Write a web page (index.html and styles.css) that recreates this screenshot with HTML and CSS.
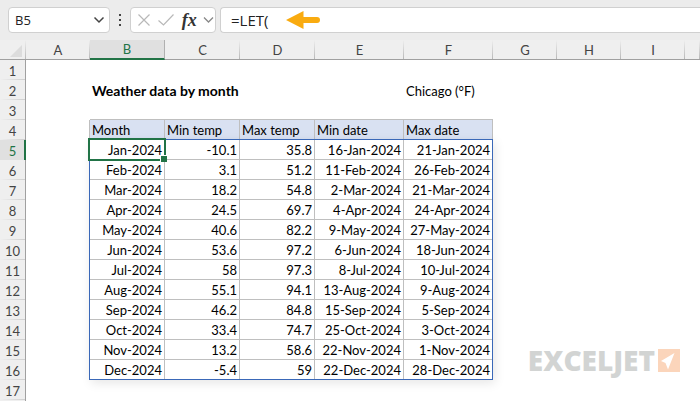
FILE: index.html
```html
<!DOCTYPE html>
<html lang="en">
<head>
<meta charset="utf-8">
<title>Weather data by month</title>
<link rel="stylesheet" href="styles.css">
</head>
<body>
<header class="toolbar">
  <div class="box name-box">
    <input class="name-input" type="text" value="B5" aria-label="Name box">
    <button class="icon-button" type="button" aria-label="Open name list">
      <svg width="12" height="8" viewBox="0 0 12 8"><path d="M1.500 1.500L6 6L10.500 1.500" fill="none" stroke="#444" stroke-width="1.500"/></svg>
    </button>
  </div>
  <svg class="grip" width="4" height="14" viewBox="0 0 4 14"><path d="M1 1h2v2h-2zM1 6h2v2h-2zM1 11h2v2h-2z" fill="#444"/></svg>
  <div class="box actions">
    <button class="icon-button" type="button" aria-label="Cancel">
      <svg width="14" height="14" viewBox="0 0 14 14"><path d="M1.500 1.500L12.500 12.500M12.500 1.500L1.500 12.500" fill="none" stroke="#b8b8b8" stroke-width="1.200"/></svg>
    </button>
    <button class="icon-button" type="button" aria-label="Enter">
      <svg width="18" height="14" viewBox="0 0 18 14"><path d="M1.500 7.500L6.500 12L16.500 1.500" fill="none" stroke="#b8b8b8" stroke-width="1.200"/></svg>
    </button>
    <button class="icon-button fx" type="button" aria-label="Insert function">fx</button>
    <button class="icon-button" type="button" aria-label="More functions">
      <svg width="11" height="8" viewBox="0 0 11 8"><path d="M1 1.500L5.500 6L10 1.500" fill="none" stroke="#888" stroke-width="1.300"/></svg>
    </button>
  </div>
  <div class="box formula">
    <input class="formula-input" type="text" value="=LET(" aria-label="Formula bar">
    <svg class="arrow" width="34" height="18" viewBox="0 0 34 18"><path d="M0 9L17.500 0V6H31A3 3 0 0 1 31 12H17.500V18Z" fill="#f9ab10"/></svg>
  </div>
</header>
<main class="sheet">
  <table class="grid">
    <colgroup><col class="c-head"><col class="c-s"><col class="c-m"><col class="c-m"><col class="c-m"><col class="c-l"><col class="c-l"><col class="c-s"><col class="c-s"><col class="c-s"><col></colgroup>
    <thead>
      <tr><th class="corner"><svg width="12" height="12" viewBox="0 0 12 12"><path d="M12 0V12H0Z" fill="#dcdcdc"/></svg></th><th>A</th><th class="active">B</th><th>C</th><th>D</th><th>E</th><th>F</th><th>G</th><th>H</th><th>I</th><th></th></tr>
    </thead>
    <tbody>
      <tr><th>1</th><td colspan="10"></td></tr>
      <tr><th>2</th><td></td><td class="title" colspan="4">Weather data by month</td><td>Chicago (°F)</td><td colspan="4"></td></tr>
      <tr><th>3</th><td></td><td class="edge"></td><td class="edge"></td><td class="edge"></td><td class="edge"></td><td class="edge"></td><td colspan="4"></td></tr>
      <tr class="labels"><th>4</th><td class="before"></td><td class="c">Month</td><td class="c">Min temp</td><td class="c">Max temp</td><td class="c">Min date</td><td class="c">Max date</td><td colspan="4"></td></tr>
      <tr class="data"><th class="active">5</th><td></td><td class="c selected">Jan-2024<span class="selection"></span></td><td class="c">-10.1</td><td class="c">35.8</td><td class="c">16-Jan-2024</td><td class="c">21-Jan-2024</td><td colspan="4"></td></tr>
      <tr class="data"><th>6</th><td></td><td class="c">Feb-2024</td><td class="c">3.1</td><td class="c">51.2</td><td class="c">11-Feb-2024</td><td class="c">26-Feb-2024</td><td colspan="4"></td></tr>
      <tr class="data"><th>7</th><td></td><td class="c">Mar-2024</td><td class="c">18.2</td><td class="c">54.8</td><td class="c">2-Mar-2024</td><td class="c">21-Mar-2024</td><td colspan="4"></td></tr>
      <tr class="data"><th>8</th><td></td><td class="c">Apr-2024</td><td class="c">24.5</td><td class="c">69.7</td><td class="c">4-Apr-2024</td><td class="c">24-Apr-2024</td><td colspan="4"></td></tr>
      <tr class="data"><th>9</th><td></td><td class="c">May-2024</td><td class="c">40.6</td><td class="c">82.2</td><td class="c">9-May-2024</td><td class="c">27-May-2024</td><td colspan="4"></td></tr>
      <tr class="data"><th>10</th><td></td><td class="c">Jun-2024</td><td class="c">53.6</td><td class="c">97.2</td><td class="c">6-Jun-2024</td><td class="c">18-Jun-2024</td><td colspan="4"></td></tr>
      <tr class="data"><th>11</th><td></td><td class="c">Jul-2024</td><td class="c">58</td><td class="c">97.3</td><td class="c">8-Jul-2024</td><td class="c">10-Jul-2024</td><td colspan="4"></td></tr>
      <tr class="data"><th>12</th><td></td><td class="c">Aug-2024</td><td class="c">55.1</td><td class="c">94.1</td><td class="c">13-Aug-2024</td><td class="c">9-Aug-2024</td><td colspan="4"></td></tr>
      <tr class="data"><th>13</th><td></td><td class="c">Sep-2024</td><td class="c">46.2</td><td class="c">84.8</td><td class="c">15-Sep-2024</td><td class="c">5-Sep-2024</td><td colspan="4"></td></tr>
      <tr class="data"><th>14</th><td></td><td class="c">Oct-2024</td><td class="c">33.4</td><td class="c">74.7</td><td class="c">25-Oct-2024</td><td class="c">3-Oct-2024</td><td colspan="4"></td></tr>
      <tr class="data"><th>15</th><td></td><td class="c">Nov-2024</td><td class="c">13.2</td><td class="c">58.6</td><td class="c">22-Nov-2024</td><td class="c">1-Nov-2024</td><td colspan="4"></td></tr>
      <tr class="data"><th>16</th><td></td><td class="c">Dec-2024</td><td class="c">-5.4</td><td class="c">59</td><td class="c">22-Dec-2024</td><td class="c">28-Dec-2024</td><td colspan="4"></td></tr>
      <tr><th>17</th><td colspan="10"></td></tr>
    </tbody>
  </table>
  <div class="range"></div>
  <div class="brand">
    <span>EXCELJET</span>
    <svg width="22" height="23" viewBox="0 0 22 23"><rect width="22" height="23" fill="#fbd5bb"/><path d="M16.500 4L3 12L7.500 14L10 20.500Z" fill="#fff"/></svg>
  </div>
</main>
</body>
</html>
```
FILE: styles.css
```css
* {
  box-sizing: border-box;
}

body {
  margin: 0;
  min-height: 100vh;
  display: flex;
  flex-direction: column;
  overflow: hidden;
  background: #fff;
  color: #000;
  font-family: Lato, sans-serif;
  font-size: 13px;
}

.toolbar {
  display: flex;
  align-items: center;
  height: 40px;
  padding-left: 8px;
  background: #ececec;
}

.box {
  display: flex;
  align-items: center;
  height: 26px;
  background: #fff;
  border: 1px solid #d0d0d0;
  border-radius: 4px;
}

.name-box {
  width: 102px;
  padding: 0 4px 0 6px;
}

.name-input,
.formula-input {
  min-width: 0;
  padding: 0;
  border: 0;
  outline: 0;
  background: none;
  color: #222;
  font: 13px "Open Sans", sans-serif;
}

.name-input {
  flex: 1;
}

.grip {
  margin: 0 8px;
}

.icon-button {
  display: flex;
  align-items: center;
  padding: 0;
  border: 0;
  background: none;
}

.actions {
  width: 86px;
  justify-content: space-between;
  padding: 0 1px 0 6px;
}

.fx {
  color: #333;
  font: italic bold 18px/20px "Liberation Serif", serif;
}

.formula {
  flex: 1;
  margin-left: 4px;
  padding-left: 10px;
  border-right: 0;
  border-radius: 4px 0 0 4px;
}

.formula-input {
  width: 55px;
  font-size: 15px;
}

.sheet {
  position: relative;
  flex: 1;
  background: linear-gradient(to right, #efefef 25px, #a0a0a0 25px, #a0a0a0 26px, #fff 26px);
}

.grid {
  width: 100%;
  table-layout: fixed;
  border-collapse: separate;
  border-spacing: 0;
}

.c-head { width: 26px; }
.c-s { width: 64px; }
.c-m { width: 75px; }
.c-l { width: 89px; }

th,
td {
  height: 20px;
  padding: 1px 2px 0;
  line-height: 18px;
  white-space: nowrap;
}

td {
  text-align: left;
}

th {
  padding: 1px 0 0;
  color: #444;
  font-weight: 400;
  text-align: center;
  background: #efefef;
}

thead th {
  border-bottom: 1px solid #a0a0a0;
  background: linear-gradient(to bottom, #efefef, #b8b8b8) right / 1px 100% no-repeat #efefef;
}

thead th.active {
  padding-top: 0;
  background: #e0e0e0;
  color: #217346;
  border-right: 1px solid #b0b0b0;
  border-bottom: 2px solid #217346;
}

thead .corner {
  padding: 0;
}

.corner svg {
  display: block;
  margin: 3px 0 0 10px;
}

tbody th {
  border-right: 1px solid #a0a0a0;
  background: linear-gradient(to right, #efefef, #cfcfcf) bottom / 100% 1px no-repeat #efefef;
}

tbody th.active {
  padding-left: 1px;
  background: #e0e0e0;
  color: #217346;
  border-right: 2px solid #217346;
}

.title {
  font-size: 14px;
  font-weight: 700;
}

.edge {
  border-bottom: 1px solid #bfbfbf;
}

.before {
  border-right: 1px solid #bfbfbf;
}

.c {
  border-right: 1px solid #bfbfbf;
  border-bottom: 1px solid #bfbfbf;
}

.labels .c {
  background: #d9e1f2;
}

.data .c {
  text-align: right;
}

.selected {
  position: relative;
}

.selection {
  position: absolute;
  z-index: 2;
  inset: -2px;
  border: 2px solid #217346;
}

.selection::after {
  content: "";
  position: absolute;
  right: -3px;
  bottom: -3px;
  width: 6px;
  height: 6px;
  background: #217346;
  border: solid #fff;
  border-width: 1px 0 0 1px;
}

/* Outline of B5:F16, drawn over the cell borders */
.range {
  position: absolute;
  left: 89px;
  top: 99px;
  width: 404px;
  height: 241px;
  border: 1px solid #3a68b8;
  box-shadow: 2px 3px 10px rgba(0, 0, 0, 0.1);
  pointer-events: none;
}

.brand {
  position: absolute;
  right: 20px;
  bottom: 29px;
  display: flex;
  align-items: center;
  gap: 3px;
  height: 23px;
  color: #d2d4d3;
  font: 800 28px/23px "Open Sans", sans-serif;
}
```
